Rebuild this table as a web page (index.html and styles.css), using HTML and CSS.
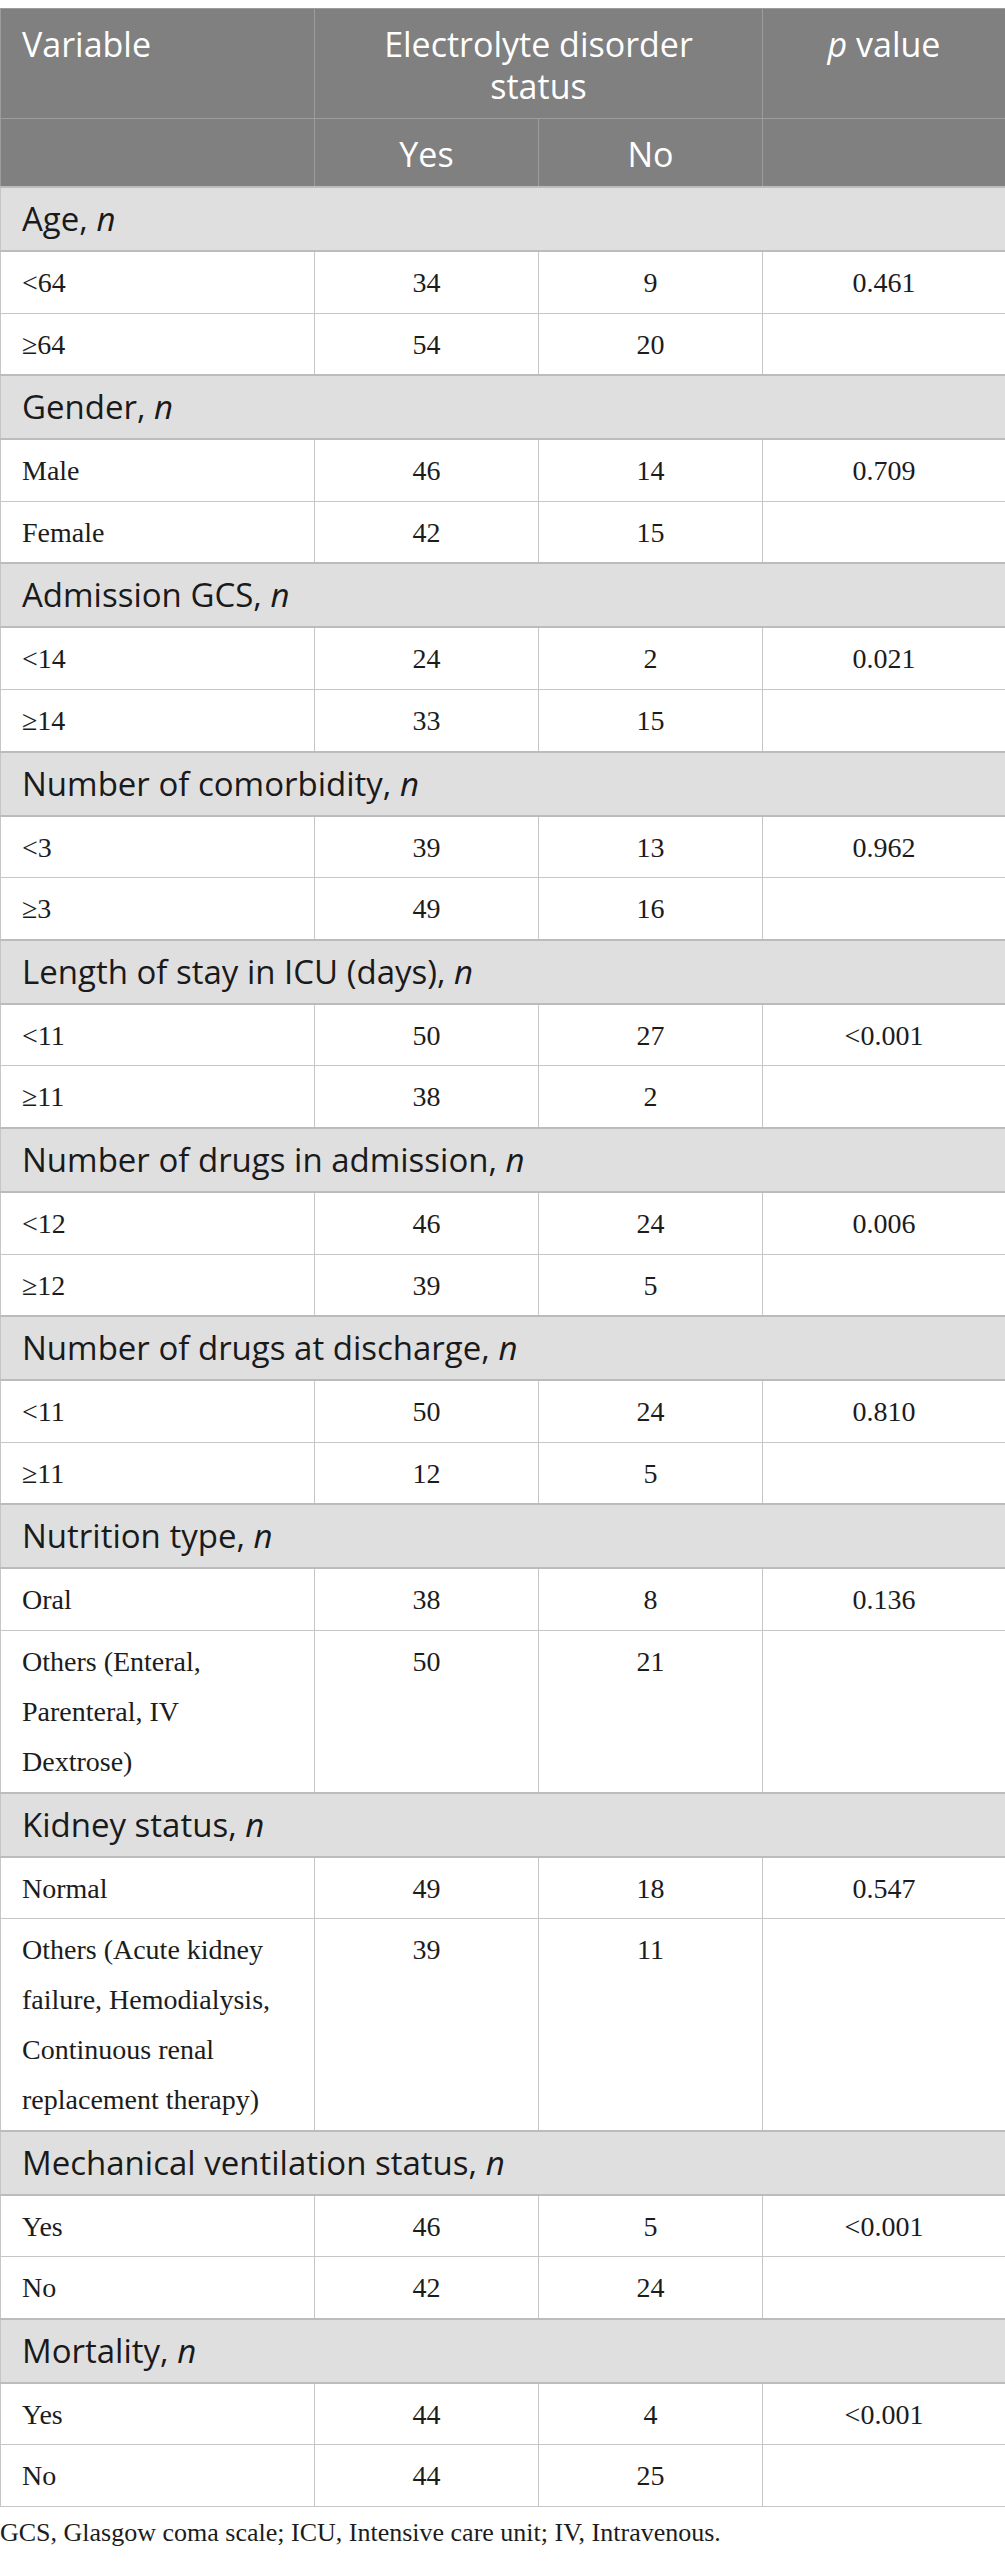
FILE: index.html
```html
<!DOCTYPE html>
<html lang="en">
<head>
<meta charset="utf-8">
<title>Electrolyte disorder status</title>
<link rel="stylesheet" href="styles.css">
</head>
<body>
<div class="wrap">
<table class="tbl">
  <colgroup>
    <col class="c1"><col class="c2"><col class="c3"><col class="c4">
  </colgroup>
  <thead>
    <tr class="h1">
      <th class="left">Variable</th>
      <th colspan="2">Electrolyte disorder<br>status</th>
      <th><i>p</i> value</th>
    </tr>
    <tr class="h2">
      <th></th>
      <th>Yes</th>
      <th>No</th>
      <th></th>
    </tr>
  </thead>
  <tbody>
    <tr class="grp"><td colspan="4">Age, <i>n</i></td></tr>
    <tr><td>&lt;64</td><td>34</td><td>9</td><td>0.461</td></tr>
    <tr><td>≥64</td><td>54</td><td>20</td><td></td></tr>

    <tr class="grp"><td colspan="4">Gender, <i>n</i></td></tr>
    <tr><td>Male</td><td>46</td><td>14</td><td>0.709</td></tr>
    <tr><td>Female</td><td>42</td><td>15</td><td></td></tr>

    <tr class="grp"><td colspan="4">Admission GCS, <i>n</i></td></tr>
    <tr><td>&lt;14</td><td>24</td><td>2</td><td>0.021</td></tr>
    <tr><td>≥14</td><td>33</td><td>15</td><td></td></tr>

    <tr class="grp"><td colspan="4">Number of comorbidity, <i>n</i></td></tr>
    <tr><td>&lt;3</td><td>39</td><td>13</td><td>0.962</td></tr>
    <tr><td>≥3</td><td>49</td><td>16</td><td></td></tr>

    <tr class="grp"><td colspan="4">Length of stay in ICU (days), <i>n</i></td></tr>
    <tr><td>&lt;11</td><td>50</td><td>27</td><td>&lt;0.001</td></tr>
    <tr><td>≥11</td><td>38</td><td>2</td><td></td></tr>

    <tr class="grp"><td colspan="4">Number of drugs in admission, <i>n</i></td></tr>
    <tr><td>&lt;12</td><td>46</td><td>24</td><td>0.006</td></tr>
    <tr><td>≥12</td><td>39</td><td>5</td><td></td></tr>

    <tr class="grp"><td colspan="4">Number of drugs at discharge, <i>n</i></td></tr>
    <tr><td>&lt;11</td><td>50</td><td>24</td><td>0.810</td></tr>
    <tr><td>≥11</td><td>12</td><td>5</td><td></td></tr>

    <tr class="grp"><td colspan="4">Nutrition type, <i>n</i></td></tr>
    <tr><td>Oral</td><td>38</td><td>8</td><td>0.136</td></tr>
    <tr><td>Others (Enteral, Parenteral, IV Dextrose)</td><td>50</td><td>21</td><td></td></tr>

    <tr class="grp"><td colspan="4">Kidney status, <i>n</i></td></tr>
    <tr><td>Normal</td><td>49</td><td>18</td><td>0.547</td></tr>
    <tr><td>Others (Acute kidney failure, Hemodialysis, Continuous renal replacement therapy)</td><td>39</td><td>11</td><td></td></tr>

    <tr class="grp"><td colspan="4">Mechanical ventilation status, <i>n</i></td></tr>
    <tr><td>Yes</td><td>46</td><td>5</td><td>&lt;0.001</td></tr>
    <tr><td>No</td><td>42</td><td>24</td><td></td></tr>

    <tr class="grp"><td colspan="4">Mortality, <i>n</i></td></tr>
    <tr><td>Yes</td><td>44</td><td>4</td><td>&lt;0.001</td></tr>
    <tr><td>No</td><td>44</td><td>25</td><td></td></tr>
  </tbody>
</table>
<p class="foot">GCS, Glasgow coma scale; ICU, Intensive care unit; IV, Intravenous.</p>
</div>
</body>
</html>
```

FILE: styles.css
```css
html, body {
  margin: 0;
  padding: 0;
  background: #ffffff;
}

.wrap {
  width: 1005px;
  padding-top: 8px;
}

.tbl {
  width: 1005px;
  table-layout: fixed;
  border-collapse: collapse;
}

.c1 { width: 314px; }
.c2 { width: 224px; }
.c3 { width: 224px; }
.c4 { width: 243px; }

.tbl th {
  background: #808080;
  color: #ffffff;
  font-family: "Open Sans", "Noto Sans", sans-serif;
  font-weight: 400;
  font-size: 34px;
  line-height: 42px;
  text-align: center;
  vertical-align: top;
  border: 1px solid #9c9c9c;
  padding: 14px 8px 11px;
}

.tbl th.left {
  text-align: left;
  padding-left: 21px;
}

.tbl th i {
  font-style: italic;
}

.tbl td {
  font-family: "Liberation Serif", "Times New Roman", serif;
  font-size: 28px;
  line-height: 50px;
  color: #1c1c1c;
  text-align: center;
  vertical-align: top;
  border: 1px solid #c6c6c6;
  padding: 6px 8px 4.6px;
}

.tbl td:first-child {
  text-align: left;
  padding-left: 21px;
  padding-right: 33px;
}

.tbl tr.grp td {
  background: #e0dfe0;
  font-family: "Open Sans", "Noto Sans", sans-serif;
  font-size: 33px;
  color: #1a1a1a;
  text-align: left;
  border-top: 2px solid #bcbcbc;
  border-bottom: 2px solid #bcbcbc;
  padding: 6px 8px 6px 21px;
}

.foot {
  margin: 9px 0 0;
  font-family: "Liberation Serif", "Times New Roman", serif;
  font-size: 26px;
  line-height: 34px;
  color: #1c1c1c;
}
```
